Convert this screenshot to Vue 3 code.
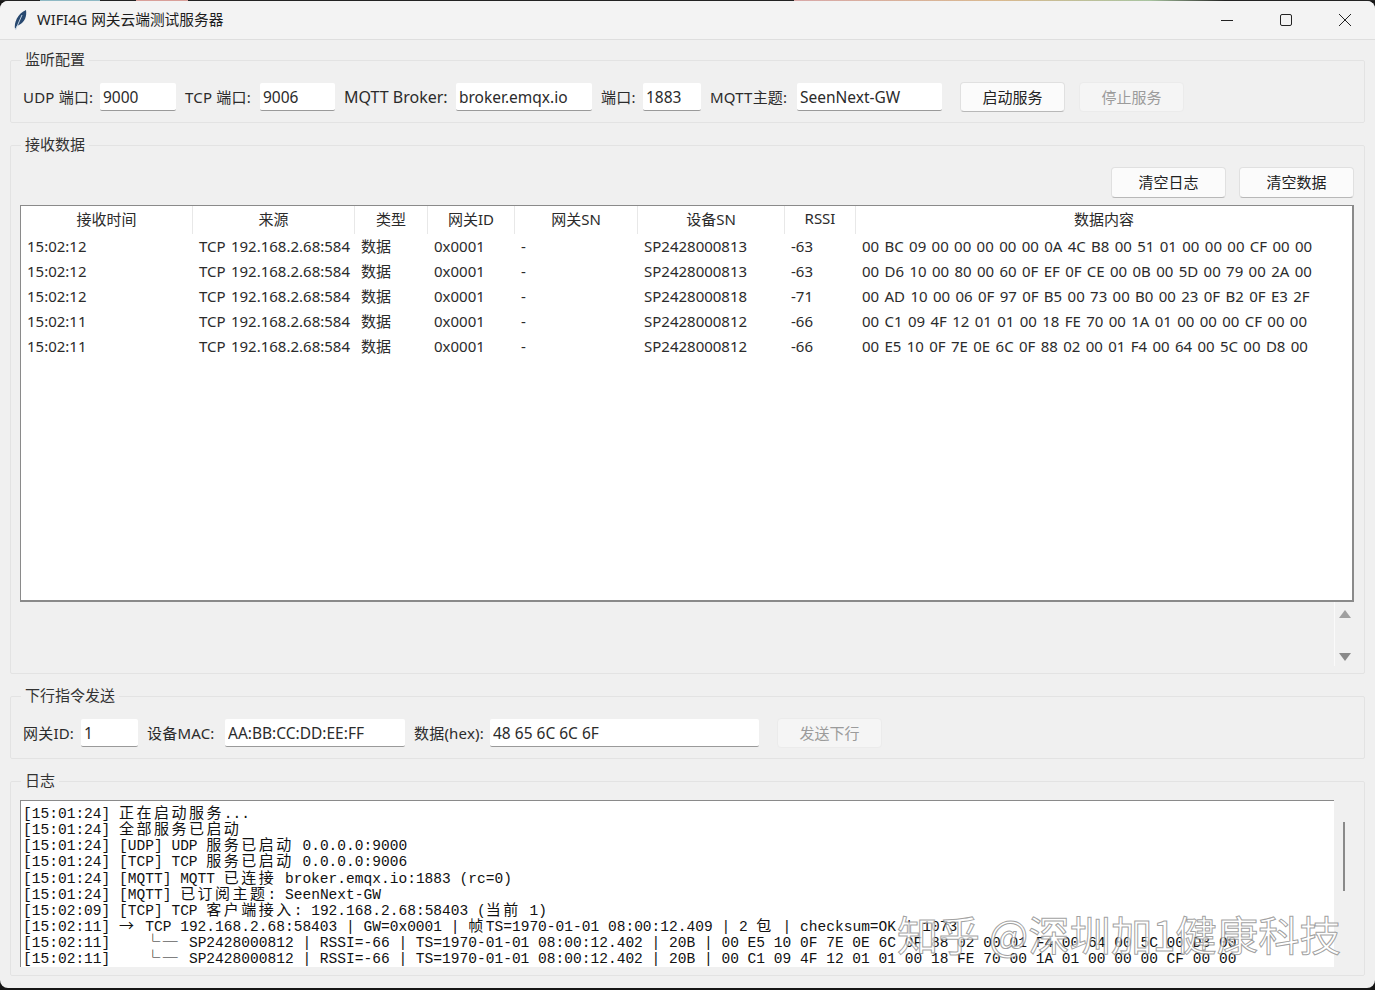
<script setup>
const columns = ['接收时间', '来源', '类型', '网关ID', '网关SN', '设备SN', 'RSSI', '数据内容']

const rows = [
  ['15:02:12', 'TCP 192.168.2.68:584', '数据', '0x0001', '-', 'SP2428000813', '-63', '00 BC 09 00 00 00 00 00 0A 4C B8 00 51 01 00 00 00 CF 00 00'],
  ['15:02:12', 'TCP 192.168.2.68:584', '数据', '0x0001', '-', 'SP2428000813', '-63', '00 D6 10 00 80 00 60 0F EF 0F CE 00 0B 00 5D 00 79 00 2A 00'],
  ['15:02:12', 'TCP 192.168.2.68:584', '数据', '0x0001', '-', 'SP2428000818', '-71', '00 AD 10 00 06 0F 97 0F B5 00 73 00 B0 00 23 0F B2 0F E3 2F'],
  ['15:02:11', 'TCP 192.168.2.68:584', '数据', '0x0001', '-', 'SP2428000812', '-66', '00 C1 09 4F 12 01 01 00 18 FE 70 00 1A 01 00 00 00 CF 00 00'],
  ['15:02:11', 'TCP 192.168.2.68:584', '数据', '0x0001', '-', 'SP2428000812', '-66', '00 E5 10 0F 7E 0E 6C 0F 88 02 00 01 F4 00 64 00 5C 00 D8 00']
]

const logLines = [
  '[15:01:24] 正在启动服务...',
  '[15:01:24] 全部服务已启动',
  '[15:01:24] [UDP] UDP 服务已启动 0.0.0.0:9000',
  '[15:01:24] [TCP] TCP 服务已启动 0.0.0.0:9006',
  '[15:01:24] [MQTT] MQTT 已连接 broker.emqx.io:1883 (rc=0)',
  '[15:01:24] [MQTT] 已订阅主题: SeenNext-GW',
  '[15:02:09] [TCP] TCP 客户端接入: 192.168.2.68:58403 (当前 1)',
  '[15:02:11] → TCP 192.168.2.68:58403 | GW=0x0001 | 帧TS=1970-01-01 08:00:12.409 | 2 包 | checksum=OK | 1073',
  '[15:02:11]    └─ SP2428000812 | RSSI=-66 | TS=1970-01-01 08:00:12.402 | 20B | 00 E5 10 0F 7E 0E 6C 0F 88 02 00 01 F4 00 64 00 5C 00 D8 00',
  '[15:02:11]    └─ SP2428000812 | RSSI=-66 | TS=1970-01-01 08:00:12.402 | 20B | 00 C1 09 4F 12 01 01 00 18 FE 70 00 1A 01 00 00 00 CF 00 00'
]

// 宽字符占两格，和等宽字体对齐
const splitWide = (line) => line.split(/([^\x00-\x7f]+)/).filter(Boolean).map((text) => ({
  text,
  wide: /[^\x00-\x7f]/.test(text)
}))
</script>

<template>
  <div class="window">
    <header class="titlebar">
      <svg class="app-icon" width="16" height="22" viewBox="0 0 16 22">
        <path d="M3 20C2 14 5 5 14 1c1 6-1 12-7 15l-2 1z" fill="#27486f" />
        <path d="M3.5 21L10 6" stroke="#c4d4e4" stroke-width="1" fill="none" />
      </svg>
      <span class="app-title">WIFI4G 网关云端测试服务器</span>
      <div class="win-controls">
        <svg width="14" height="14" viewBox="0 0 14 14"><path d="M1 7.5h12" stroke="#222" fill="none" /></svg>
        <svg width="14" height="14" viewBox="0 0 14 14"><rect x="1.5" y="1.5" width="11" height="11" rx="1.5" stroke="#222" fill="none" /></svg>
        <svg width="14" height="14" viewBox="0 0 14 14"><path d="M1 1l12 12M13 1L1 13" stroke="#222" fill="none" /></svg>
      </div>
    </header>

    <main class="content">
      <fieldset class="group">
        <legend>监听配置</legend>
        <div class="form-row listen-row">
          <label>UDP 端口:</label>
          <input value="9000" readonly>
          <label class="next">TCP 端口:</label>
          <input value="9006" readonly>
          <label class="next latin">MQTT Broker:</label>
          <input value="broker.emqx.io" readonly>
          <label class="next">端口:</label>
          <input value="1883" readonly>
          <label class="next">MQTT主题:</label>
          <input value="SeenNext-GW" readonly>
          <button class="btn first-btn">启动服务</button>
          <button class="btn second-btn" disabled>停止服务</button>
        </div>
      </fieldset>

      <fieldset class="group data-group">
        <legend>接收数据</legend>
        <div class="toolbar">
          <button class="btn">清空日志</button>
          <button class="btn">清空数据</button>
        </div>
        <div class="table">
          <div class="grid-row head">
            <div v-for="c in columns" :key="c" class="th">{{ c }}</div>
          </div>
          <div v-for="(row, i) in rows" :key="i" class="grid-row">
            <div v-for="(cell, j) in row" :key="j" class="td">{{ cell }}</div>
          </div>
        </div>
        <div class="table-scroll">
          <div class="scroll-strip">
            <span class="arrow up"></span>
            <span class="arrow down"></span>
          </div>
        </div>
      </fieldset>

      <fieldset class="group">
        <legend>下行指令发送</legend>
        <div class="form-row send-row">
          <label>网关ID:</label>
          <input value="1" readonly>
          <label class="next">设备MAC:</label>
          <input value="AA:BB:CC:DD:EE:FF" readonly>
          <label class="next">数据(hex):</label>
          <input value="48 65 6C 6C 6F" readonly>
          <button class="btn first-btn" disabled>发送下行</button>
        </div>
      </fieldset>

      <fieldset class="group log-group">
        <legend>日志</legend>
        <div class="log-wrap">
          <div class="log">
            <div v-for="(line, i) in logLines" :key="i" class="log-line">
              <span v-for="(part, k) in splitWide(line)" :key="k" :class="{ wide: part.wide }">{{ part.text }}</span>
            </div>
          </div>
          <div class="log-scroll"><span class="thumb"></span></div>
        </div>
      </fieldset>
    </main>

    <div class="watermark">知乎 @深圳加1健康科技</div>
  </div>
</template>

<style>
html, body { margin: 0; }
html {
  background:
    linear-gradient(90deg, #222 40px, #8fb9c4 40px, #8fb9c4 100px, #222 100px, #222 136px, #d9a09a 136px, #d9a09a 188px, #222 188px, #222 794px, #d8a8a8 794px, #d9b98f 1000px, #a8c4a0 1150px, #222 1225px) top / 100% 1px no-repeat,
    #161616;
}
</style>

<style scoped>
.window {
  position: relative;
  box-sizing: border-box;
  width: 1375px;
  height: 987px;
  margin-top: 1px;
  overflow: hidden;
  background: #f0f0f0;
  border-radius: 8px;
  font-family: "Noto Sans", "Noto Sans CJK SC", sans-serif;
  font-size: 15px;
  color: #2b2b2b;
}

.titlebar {
  display: flex;
  align-items: center;
  box-sizing: border-box;
  height: 39px;
  padding-left: 12px;
  background: #f3f3f3;
  border-bottom: 1px solid #dedede;
}
.app-icon { margin-right: 9px; }
.app-title { font-size: 14.7px; color: #1c1c1c; padding-bottom: 3px; }
.win-controls {
  display: flex;
  gap: 45px;
  margin-left: auto;
  padding-right: 23px;
}

.content {
  display: flex;
  flex-direction: column;
  gap: 12px;
  padding: 10px 10px 0;
}

.group {
  margin: 0;
  padding: 12px 10px 10px 12px;
  min-width: 0;
  border: 1px solid #e3e3e3;
  border-radius: 2px;
}
.group legend {
  margin-left: -2px;
  padding: 0 4px;
  height: 20px;
  line-height: 18px;
  font-size: 15px;
  color: #333;
}
.data-group legend,
.log-group legend { margin-left: 1px; }

.form-row {
  display: grid;
  align-items: center;
  height: 30px;
}
.listen-row { grid-template-columns: 77px 76px 84px 75px 121px 136px 51px 58px 96px 145px 123px 119px; }
.send-row { grid-template-columns: 58px 57px 87px 180px 85px 269px 122px; }

.form-row label {
  padding-bottom: 2px;
  white-space: nowrap;
  letter-spacing: 0.2px;
}
.form-row label.next { padding-left: 9px; }
.form-row label.latin { padding-bottom: 0; font-size: 16px; letter-spacing: 0; }

input {
  box-sizing: border-box;
  width: 100%;
  height: 28px;
  padding: 0 3px;
  border: 0;
  border-bottom: 1px solid #9a9a9a;
  border-radius: 2px;
  outline: 0;
  background: #fff;
  font: inherit;
  font-size: 15.5px;
  color: #2b2b2b;
}

.btn {
  box-sizing: border-box;
  height: 30px;
  width: 105px;
  padding: 0 0 2px;
  background: #fbfbfb;
  border: 1px solid #e0e0e0;
  border-bottom-color: #b8b8b8;
  border-radius: 4px;
  font: inherit;
  color: #222;
}
.btn:disabled {
  background: #f5f5f5;
  border-color: #ebebeb;
  color: #9b9b9b;
}
.first-btn { margin-left: 18px; }
.second-btn { margin-left: 14px; }

.toolbar {
  display: flex;
  justify-content: flex-end;
  gap: 13px;
  margin-bottom: 7px;
}
.toolbar .btn { width: 115px; height: 31px; }

.data-group {
  box-sizing: border-box;
  height: 539px;
  padding-left: 9px;
  padding-right: 10px;
}

.table {
  box-sizing: border-box;
  height: 397px;
  background: #fff;
  border: 1px solid #8a8a8a;
  border-bottom-width: 2px;
  border-right-width: 2px;
}
.grid-row {
  display: grid;
  grid-template-columns: 172px 162px 73px 87px 123px 147px 71px 1fr;
  height: 25px;
}
.grid-row.head { height: 28px; }
.th {
  display: flex;
  align-items: center;
  justify-content: center;
  padding-bottom: 4px;
  border-right: 1px solid #e8e8e8;
}
.th:last-child { border-right: 0; }
.td {
  overflow: hidden;
  padding-left: 6px;
  line-height: 25px;
  white-space: nowrap;
  word-spacing: 1.45px;
}

.table-scroll {
  display: flex;
  justify-content: flex-end;
}
.scroll-strip {
  display: flex;
  flex-direction: column;
  align-items: center;
  justify-content: space-between;
  box-sizing: border-box;
  width: 20px;
  height: 64px;
  padding: 8px 0 5px;
  border-left: 1px solid #fafafa;
}
.arrow {
  width: 0;
  height: 0;
  border-left: 6px solid transparent;
  border-right: 6px solid transparent;
}
.arrow.up { border-bottom: 8px solid #a0a0a0; }
.arrow.down { border-top: 8px solid #8a8a8a; }

.log-group {
  box-sizing: border-box;
  height: 205px;
  padding: 9px 9px 0;
}
.log-wrap { display: flex; }
.log {
  box-sizing: border-box;
  width: 1314px;
  height: 167px;
  overflow: hidden;
  padding: 3px 0 0 2px;
  background: #fff;
  border-top: 1px solid #8a8a8a;
  border-left: 1px solid #8a8a8a;
  font-family: "Liberation Mono", "Noto Sans CJK SC", monospace;
  font-size: 14.56px;
  color: #111;
}
.log-line {
  height: 16.15px;
  line-height: 16.15px;
  white-space: pre;
}
.wide {
  font-size: 15px;
  letter-spacing: 2.47px;
  font-family: "Noto Sans CJK SC", sans-serif;
}
.log-scroll {
  display: flex;
  justify-content: center;
  width: 20px;
}
.thumb {
  width: 2px;
  height: 69px;
  margin-top: 22px;
  background: #8a8a8a;
}

.watermark {
  position: absolute;
  left: 897px;
  top: 906px;
  font-family: "Noto Sans CJK SC", sans-serif;
  font-size: 41.4px;
  line-height: 52px;
  white-space: nowrap;
  color: rgba(255, 255, 255, 0.72);
  -webkit-text-stroke: 1px rgba(130, 130, 130, 0.75);
}
</style>
